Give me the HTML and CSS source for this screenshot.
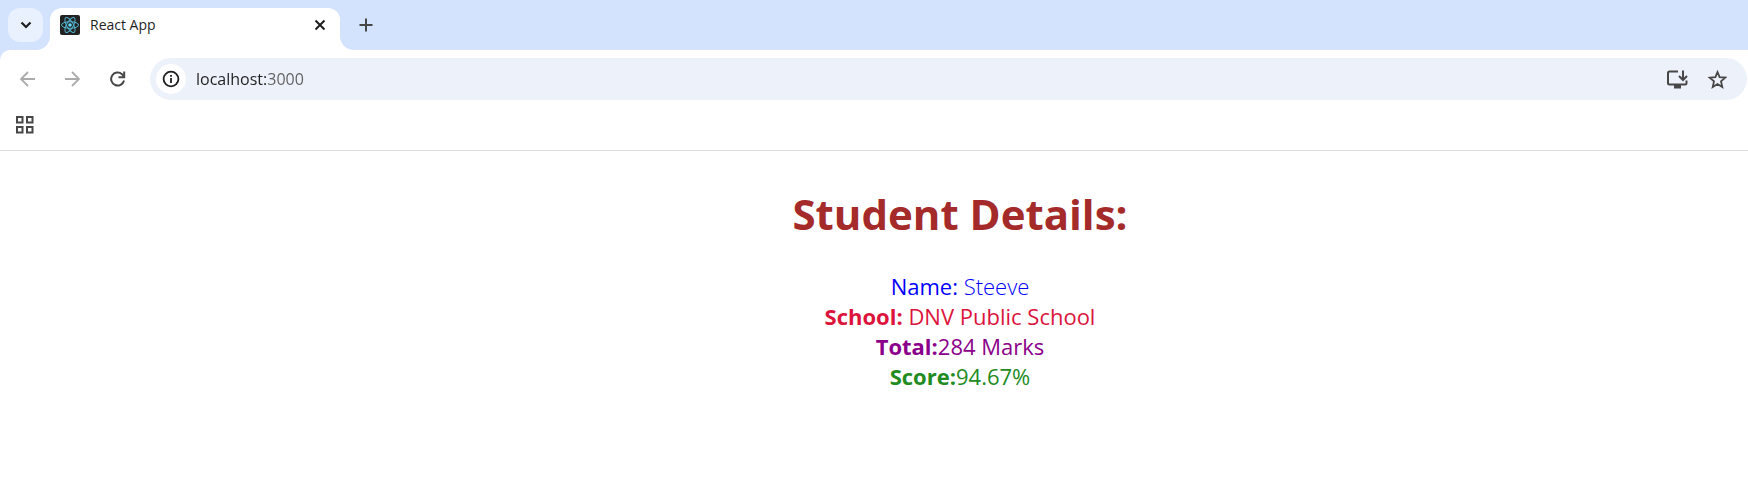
FILE: index.html
```html
<!DOCTYPE html>
<html lang="en">
<head>
<meta charset="utf-8">
<title>React App</title>
<link rel="stylesheet" href="styles.css">
</head>
<body>
<header class="browser">
  <div class="tab-strip">
    <div class="strip-start">
      <button class="tab-search" type="button" aria-label="Search tabs">
        <svg width="12" height="12" viewBox="0 0 12 12"><path d="M1.500 3.500 6 8l4.500-4.500" fill="none" stroke="#1f1f1f" stroke-width="2.200"/></svg>
      </button>
    </div>
    <div class="tab">
      <div class="tab-body">
        <svg class="favicon" width="20" height="20" viewBox="0 0 20 20">
          <rect width="20" height="20" rx="2" fill="#222"/>
          <g fill="none" stroke="#53b5d0" stroke-width="1">
            <ellipse cx="10" cy="10" rx="8.500" ry="3.300"/>
            <ellipse cx="10" cy="10" rx="8.500" ry="3.300" transform="rotate(60 10 10)"/>
            <ellipse cx="10" cy="10" rx="8.500" ry="3.300" transform="rotate(120 10 10)"/>
          </g>
          <circle cx="10" cy="10" r="1.800" fill="#61dafb"/>
        </svg>
        <span class="tab-title">React App</span>
        <button class="tab-close" type="button" aria-label="Close tab">
          <svg width="12" height="12" viewBox="0 0 12 12"><path d="m1.500 1.500 9 9m0-9-9 9" stroke="#1f1f1f" stroke-width="2"/></svg>
        </button>
      </div>
    </div>
    <div class="strip-end">
      <button class="new-tab" type="button" aria-label="New tab">
        <svg width="14" height="14" viewBox="0 0 14 14"><path d="M7 .5v13M.5 7h13" stroke="#474747" stroke-width="2"/></svg>
      </button>
    </div>
  </div>
  <div class="toolbar">
    <nav class="nav-buttons" aria-label="Navigation">
      <button type="button" aria-label="Back">
        <svg width="16" height="16" viewBox="0 0 16 16"><path d="M15 8H1.500M8 1 1 8l7 7" fill="none" stroke="#ababab" stroke-width="1.800"/></svg>
      </button>
      <button type="button" aria-label="Forward">
        <svg width="16" height="16" viewBox="0 0 16 16"><path d="M0 8h13.500M7 1l7 7-7 7" fill="none" stroke="#ababab" stroke-width="1.800"/></svg>
      </button>
      <button type="button" aria-label="Reload">
        <svg width="16" height="16" viewBox="0 0 16 16"><path d="M14 9.500A6.500 6.500 0 1 1 12 3.200L14 5.500" fill="none" stroke="#474747" stroke-width="2"/><path d="M14.200.5v5.700H8.500" fill="none" stroke="#474747" stroke-width="2"/></svg>
      </button>
    </nav>
    <div class="address-bar">
      <button class="site-info" type="button" aria-label="View site information">
        <svg width="18" height="18" viewBox="0 0 18 18"><circle cx="9" cy="9" r="7.400" fill="none" stroke="#1f1f1f" stroke-width="1.800"/><path d="M8.100 8h1.800v5H8.100zM8.100 5h1.800v1.800H8.100z" fill="#1f1f1f"/></svg>
      </button>
      <input class="url" type="text" aria-label="Address" value="localhost:3000">
      <button class="install" type="button" aria-label="Install app">
        <svg width="22" height="20" viewBox="0 0 22 20"><path d="M12 2.500H3.500Q2 2.500 2 4v10q0 1.500 1.500 1.500h15.500q1.500 0 1.500-1.500v-2.500" fill="none" stroke="#474747" stroke-width="2"/><path d="M8 16h7v3.500H8z" fill="#474747"/><path d="M17 1.500V10M13 7l4 4 4-4" fill="none" stroke="#474747" stroke-width="2"/></svg>
      </button>
      <button class="bookmark" type="button" aria-label="Bookmark this page">
        <svg width="20" height="20" viewBox="0 0 20 20"><path d="m10.500 3 2.100 5.100 5.700.5-4.300 3.800 1.300 5.600-4.800-3-4.800 3L7 12.400 2.700 8.600l5.700-.5z" fill="none" stroke="#474747" stroke-width="1.800"/></svg>
      </button>
    </div>
  </div>
  <div class="bookmarks">
    <button type="button" aria-label="Apps">
      <svg width="18" height="18" viewBox="0 0 18 18"><path d="M1 1h5.500v5.500H1zM11 1h5.500v5.500H11zM1 11h5.500v5.500H1zM11 11h5.500v5.500H11z" fill="none" stroke="#474747" stroke-width="2"/></svg>
    </button>
  </div>
</header>
<main class="page">
  <h1 class="heading">Student Details:</h1>
  <p class="row name"><b>Name:</b> <span>Steeve</span></p>
  <p class="row school"><b>School:</b> <span>DNV Public School</span></p>
  <p class="row total"><b>Total:</b><span>284 Marks</span></p>
  <p class="row score"><b>Score:</b><span>94.67%</span></p>
</main>
</body>
</html>
```
FILE: styles.css
```css
* { box-sizing: border-box; }
body {
  margin: 0;
  background: #fff;
  font-family: "Open Sans", "Noto Sans", sans-serif;
}
button {
  display: inline-flex;
  align-items: center;
  justify-content: center;
  flex: none;
  padding: 0;
  border: 0;
  background: none;
}
svg { display: block; flex: none; }

.browser {
  border-bottom: 1px solid #dedede;
  background: linear-gradient(#fff 50px, #d3e3fd 50px);
}
.tab-strip {
  display: flex;
  height: 50px;
}
.strip-start {
  width: 50px;
  padding: 8px;
  background: #d3e3fd;
  border-bottom-right-radius: 14px;
}
.tab-search {
  width: 35px;
  height: 34px;
  border-radius: 12px;
  background: #e9f0fe;
}
.tab {
  width: 290px;
  padding-top: 8px;
  background: linear-gradient(#d3e3fd 28px, #fff 28px);
}
.tab-body {
  display: flex;
  align-items: center;
  height: 42px;
  padding: 0 13px 8px 10px;
  border-radius: 12px 12px 0 0;
  background: #fff;
}
.tab-title {
  flex: 1;
  margin-left: 10px;
  font-size: 14px;
  line-height: 20px;
  color: #1f1f1f;
}
.strip-end {
  display: flex;
  flex: 1;
  align-items: center;
  padding-left: 19px;
  background: #d3e3fd;
  border-bottom-left-radius: 14px;
}
.tab-close, .new-tab { width: 14px; height: 14px; }

.toolbar {
  display: flex;
  align-items: center;
  height: 58px;
  padding: 0 1px 0 20px;
  border-top-left-radius: 10px;
  background: #fff;
}
.nav-buttons {
  display: flex;
  gap: 29px;
  width: 130px;
}
.address-bar {
  display: flex;
  flex: 1;
  align-items: center;
  height: 42px;
  padding: 0 20px 0 6px;
  border-radius: 21px;
  background: #ecf1fa;
}
.site-info {
  width: 30px;
  height: 30px;
  border-radius: 50%;
  background: #fff;
}
.url {
  flex: 1;
  min-width: 0;
  margin-left: 10px;
  padding: 0;
  border: 0;
  outline: 0;
  font-family: inherit;
  font-size: 16px;
  line-height: 24px;
  color: transparent;
  background: linear-gradient(90deg, #1f1f1f 70px, #5f5f5f 70px);
  background-clip: text;
}
.bookmark { margin-left: 19px; }
.bookmarks {
  display: flex;
  align-items: center;
  height: 42px;
  padding: 0 16px 8px;
  background: #fff;
}

.page {
  padding: 31px 0 32px 172px;
  text-align: center;
}
.heading {
  margin: 0 0 25px;
  font-size: 42px;
  line-height: 64px;
  font-weight: 700;
  color: brown;
}
.row {
  margin: 0;
  font-size: 22px;
  line-height: 30px;
}
.name { color: blue; font-weight: 300; }
.name b { font-weight: 400; }
.school { color: crimson; }
.total { color: darkmagenta; }
.score { color: forestgreen; }
```
